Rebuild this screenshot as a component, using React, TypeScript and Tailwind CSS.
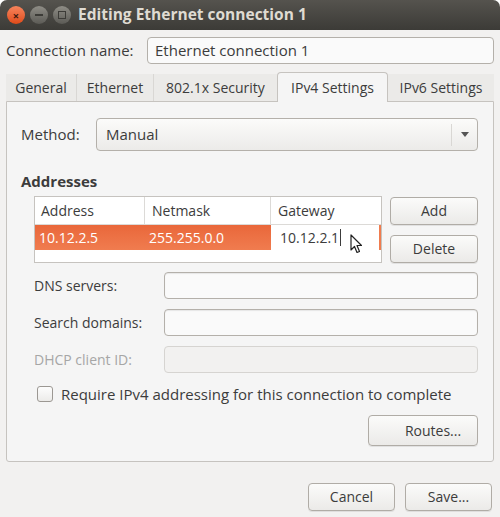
const font = { fontFamily: "'Open Sans', 'Noto Sans', sans-serif" }

function Button({ label, className = "" }: { label: string; className?: string }) {
  return (
    <button
      className={`flex items-center justify-center rounded-[4px] border border-[#b0aca6] bg-gradient-to-b from-[#fbfbfa] to-[#ebeae8] text-[14px] leading-[20px] text-[#3c3c3c] shadow-[0_1px_0_rgba(0,0,0,0.08)] ${className}`}
    >
      {label}
    </button>
  )
}

function Field({ label, disabled = false }: { label: string; disabled?: boolean }) {
  return (
    <div className="flex h-[27px] items-center">
      <span className={`w-[130px] text-[14px] ${disabled ? "text-[#a6a6a6]" : "text-[#3c3c3c]"}`}>{label}</span>
      <div
        className={`h-[27px] flex-1 rounded-[4px] border ${
          disabled ? "border-[#d6d4d1] bg-[#f2f1f0]" : "border-[#b4b0aa] bg-[#fafafa] shadow-[inset_0_1px_1px_rgba(0,0,0,0.08)]"
        }`}
      />
    </div>
  )
}

export default function App() {
  return (
    <div className="h-[517px] w-[500px] bg-white" style={font}>
      <div className="flex h-full flex-col overflow-hidden rounded-t-[7px] bg-[#f2f1f0]">
        {/* title bar */}
        <div className="flex h-[30px] shrink-0 items-center bg-gradient-to-b from-[#55534e] to-[#3c3b37] pl-[7px]">
          <div className="flex h-[18px] w-[18px] items-center justify-center rounded-full bg-gradient-to-b from-[#f7845b] to-[#df4a16] text-[11px] font-bold leading-none text-[#3a1a10]">
            ×
          </div>
          <div className="ml-[5px] flex h-[18px] w-[18px] items-center justify-center rounded-full bg-gradient-to-b from-[#8f8d86] to-[#5c5b56]">
            <div className="h-[2px] w-[8px] bg-[#3c3b37]" />
          </div>
          <div className="ml-[5px] flex h-[18px] w-[18px] items-center justify-center rounded-full bg-gradient-to-b from-[#8f8d86] to-[#5c5b56]">
            <div className="h-[8px] w-[8px] border-[1.5px] border-[#3c3b37]" />
          </div>
          <span className="ml-[7px] text-[15.5px] font-bold text-[#dfdbd2]">Editing Ethernet connection 1</span>
        </div>

        {/* connection name */}
        <div className="mt-[7px] flex h-[27px] items-center px-[6px]">
          <span className="w-[141px] text-[15px] text-[#3c3c3c]">Connection name:</span>
          <div className="flex h-[27px] flex-1 items-center rounded-[4px] border border-[#b4b0aa] bg-[#fafafa] px-[7px] text-[15px] text-[#3c3c3c]">
            Ethernet connection 1
          </div>
        </div>

        {/* tabs */}
        <div className="mt-[8px] flex h-[29px] px-[6px] text-[14px] text-[#3c3c3c]">
          <div className="mt-[2px] flex h-[27px] w-[71px] items-center justify-center border-r border-[#d9d7d4] bg-[#ebeae8]">General</div>
          <div className="mt-[2px] flex h-[27px] w-[77px] items-center justify-center border-r border-[#d9d7d4] bg-[#ebeae8]">Ethernet</div>
          <div className="mt-[2px] flex h-[27px] w-[123px] items-center justify-center bg-[#ebeae8]">802.1x Security</div>
          <div className="relative z-10 flex h-[30px] w-[111px] items-center justify-center rounded-t-[4px] border border-b-0 border-[#c6c3bf] bg-[#f5f5f5] pb-[1px]">
            IPv4 Settings
          </div>
          <div className="mt-[2px] flex h-[27px] flex-1 items-center justify-center bg-[#ebeae8]">IPv6 Settings</div>
        </div>

        {/* panel */}
        <div className="mx-[6px] flex h-[361px] shrink-0 flex-col rounded-b-[3px] border border-[#c6c3bf] bg-[#f5f5f5] pl-[14px] pr-[15px]">
          <div className="mt-[16px] flex items-center">
            <span className="w-[75px] text-[15px] text-[#3c3c3c]">Method:</span>
            <div className="flex h-[33px] flex-1 items-center rounded-[4px] border border-[#b4b0aa] bg-gradient-to-b from-[#fbfbfa] to-[#ecebe9] pl-[9px] text-[15px] text-[#3c3c3c]">
              <span className="flex-1">Manual</span>
              <div className="flex h-[22px] w-[26px] items-center justify-center border-l border-[#d9d7d4]">
                <div className="h-0 w-0 border-x-[4px] border-t-[5px] border-x-transparent border-t-[#555]" />
              </div>
            </div>
          </div>

          <div className="mt-[20px] h-[20px] text-[15px] font-bold leading-[20px] text-[#3c3c3c]">Addresses</div>

          <div className="mt-[5px] flex pl-[13px]">
            <div className="h-[67px] w-[348px] border border-[#c6c3bf] bg-white text-[14px] leading-[20px]">
              <div className="flex h-[28px] border-b border-[#dcdad7] text-[#3c3c3c]">
                <div className="flex w-[110px] items-center border-r border-[#dcdad7] pl-[6px]">Address</div>
                <div className="flex w-[126px] items-center border-r border-[#dcdad7] pl-[7px]">Netmask</div>
                <div className="flex flex-1 items-center pl-[7px]">Gateway</div>
              </div>
              <div className="flex h-[25px] bg-gradient-to-b from-[#e9673a] to-[#f07c4f] text-white">
                <div className="flex w-[110px] items-center pl-[4px]">10.12.2.5</div>
                <div className="flex w-[126px] items-center pl-[4px]">255.255.0.0</div>
                <div className="relative flex flex-1 items-center border-r-[2px] border-[#f07c4f] bg-white pl-[9px] text-[#3c3c3c]">
                  10.12.2.1
                  <span className="ml-px h-[17px] w-px bg-[#3c3c3c]" />
                  <svg className="absolute left-[79px] top-[9px]" width="13" height="20" viewBox="0 0 13 20">
                    <path d="M1 1 L1 16 L4.5 12.5 L7 18.5 L9.5 17.5 L7 11.5 L11.5 11.5 Z" fill="#fff" stroke="#222" strokeWidth="1.2" strokeLinejoin="round" />
                  </svg>
                </div>
              </div>
            </div>
            <div className="ml-[8px] flex flex-1 flex-col">
              <Button label="Add" className="mt-px h-[28px]" />
              <Button label="Delete" className="mt-[10px] h-[28px]" />
            </div>
          </div>

          <div className="mt-[9px] flex flex-col gap-[10px] pl-[13px]">
            <Field label="DNS servers:" />
            <Field label="Search domains:" />
            <Field label="DHCP client ID:" disabled />
          </div>

          <div className="mt-[11px] flex h-[20px] items-center pl-[16px]">
            <div className="h-[16px] w-[16px] rounded-[3px] border border-[#9c9893] bg-gradient-to-b from-[#fdfdfd] to-[#ecebe9]" />
            <span className="ml-[8px] text-[15px] leading-[20px] text-[#3c3c3c]">Require IPv4 addressing for this connection to complete</span>
          </div>

          <div className="mt-[11px] flex justify-end">
            <Button label="Routes..." className="h-[31px] w-[110px] pl-[20px]" />
          </div>
        </div>

        {/* bottom buttons */}
        <div className="mt-[21px] flex justify-end gap-[10px] pr-[8px]">
          <Button label="Cancel" className="h-[28px] w-[87px]" />
          <Button label="Save..." className="h-[28px] w-[87px]" />
        </div>
      </div>
    </div>
  )
}
